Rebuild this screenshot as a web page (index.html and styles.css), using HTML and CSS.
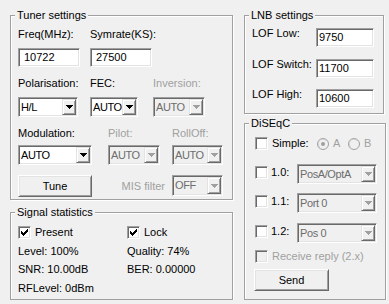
FILE: index.html
```html
<!DOCTYPE html>
<html lang="en">
<head>
  <meta charset="UTF-8">
  <meta name="viewport" content="width=device-width, initial-scale=1.0">
  <title>Tuner settings</title>
  <link rel="stylesheet" href="styles.css">
</head>
<body>
  <div class="dialog">
    <!-- Left column -->
    <div class="column left-column">
      <fieldset class="group">
        <legend>Tuner settings</legend>
        <div class="tuner-body">
          <div class="tuner-top">
            <span>Freq(MHz):</span>
            <span>Symrate(KS):</span>
            <span></span>
            <div class="edit w-62">10722</div>
            <div class="edit w-62">27500</div>
            <span></span>
            <span>Polarisation:</span>
            <span>FEC:</span>
            <span class="disabled">Inversion:</span>
            <div class="combo w-60"><span class="combo-text">H/L</span><span class="combo-btn"><svg width="7" height="4" viewBox="0 0 7 4"><path d="M0 0H7V1H6V2H5V3H4V4H3V3H2V2H1V1H0Z"/></svg></span></div>
            <div class="combo w-48"><span class="combo-text">AUTO</span><span class="combo-btn"><svg width="7" height="4" viewBox="0 0 7 4"><path d="M0 0H7V1H6V2H5V3H4V4H3V3H2V2H1V1H0Z"/></svg></span></div>
            <div class="combo combo-off w-52"><span class="combo-text">AUTO</span><span class="combo-btn"><svg width="7" height="4" viewBox="0 0 7 4"><path d="M0 0H7V1H6V2H5V3H4V4H3V3H2V2H1V1H0Z"/></svg></span></div>
          </div>
          <div class="tuner-bottom">
            <span>Modulation:</span>
            <span class="disabled">Pilot:</span>
            <span class="disabled">RollOff:</span>
            <div class="combo w-74"><span class="combo-text">AUTO</span><span class="combo-btn"><svg width="7" height="4" viewBox="0 0 7 4"><path d="M0 0H7V1H6V2H5V3H4V4H3V3H2V2H1V1H0Z"/></svg></span></div>
            <div class="combo combo-off w-52"><span class="combo-text">AUTO</span><span class="combo-btn"><svg width="7" height="4" viewBox="0 0 7 4"><path d="M0 0H7V1H6V2H5V3H4V4H3V3H2V2H1V1H0Z"/></svg></span></div>
            <div class="combo combo-off w-51"><span class="combo-text">AUTO</span><span class="combo-btn"><svg width="7" height="4" viewBox="0 0 7 4"><path d="M0 0H7V1H6V2H5V3H4V4H3V3H2V2H1V1H0Z"/></svg></span></div>
            <button class="button w-74">Tune</button>
            <span class="disabled mis-label">MIS filter</span>
            <div class="combo combo-off combo-tall w-51"><span class="combo-text">OFF</span><span class="combo-btn"><svg width="7" height="4" viewBox="0 0 7 4"><path d="M0 0H7V1H6V2H5V3H4V4H3V3H2V2H1V1H0Z"/></svg></span></div>
          </div>
        </div>
      </fieldset>

      <fieldset class="group">
        <legend>Signal statistics</legend>
        <div class="signal-body">
          <div class="signal-grid">
            <div class="check"><span class="checkbox"><svg width="11" height="11" viewBox="1 1 11 11"><path d="M9 3h1v1h-1zM8 4h2v1h-2zM3 5h1v1h-1zM7 5h3v1h-3zM3 6h2v1h-2zM6 6h3v1h-3zM3 7h5v1h-5zM4 8h3v1h-3zM5 9h1v1h-1z"/></svg></span><span>Present</span></div>
            <div class="check"><span class="checkbox"><svg width="11" height="11" viewBox="1 1 11 11"><path d="M9 3h1v1h-1zM8 4h2v1h-2zM3 5h1v1h-1zM7 5h3v1h-3zM3 6h2v1h-2zM6 6h3v1h-3zM3 7h5v1h-5zM4 8h3v1h-3zM5 9h1v1h-1z"/></svg></span><span>Lock</span></div>
            <span>Level: 100%</span>
            <span>Quality: 74%</span>
            <span>SNR: 10.00dB</span>
            <span>BER: 0.00000</span>
            <span>RFLevel: 0dBm</span>
          </div>
        </div>
      </fieldset>
    </div>

    <!-- Right column -->
    <div class="column right-column">
      <fieldset class="group lnb-group">
        <legend>LNB settings</legend>
        <div class="lnb-body">
          <div class="lnb-grid">
            <span class="lnb-label">LOF Low:</span>
            <div class="edit edit-lnb w-58">9750</div>
            <span class="lnb-label">LOF Switch:</span>
            <div class="edit edit-lnb w-58">11700</div>
            <span class="lnb-label">LOF High:</span>
            <div class="edit edit-lnb w-58">10600</div>
          </div>
        </div>
      </fieldset>

      <fieldset class="group">
        <legend>DiSEqC</legend>
        <div class="diseqc-body">
          <div class="diseqc-grid">
            <span class="checkbox"></span>
            <div class="simple-options">
              <span class="simple-label">Simple:</span>
              <svg class="radio" width="12" height="12" viewBox="0 0 12 12"><circle cx="6" cy="6" r="5.5" fill="#f0f0f0" stroke="#a0a0a0"/><path d="M2.5 9A4.5 4.5 0 0 1 9 2.5" fill="none" stroke="#c8c8c8"/><circle cx="6" cy="6" r="2" fill="#a0a0a0"/></svg>
              <span class="disabled radio-label">A</span>
              <svg class="radio" width="12" height="12" viewBox="0 0 12 12"><circle cx="6" cy="6" r="5.5" fill="#f0f0f0" stroke="#a0a0a0"/><path d="M2.5 9A4.5 4.5 0 0 1 9 2.5" fill="none" stroke="#c8c8c8"/></svg>
              <span class="disabled radio-label">B</span>
            </div>

            <span class="checkbox row-check"></span>
            <span class="row-label">1.0:</span>
            <div class="combo combo-off w-80"><span class="combo-text">PosA/OptA</span><span class="combo-btn"><svg width="7" height="4" viewBox="0 0 7 4"><path d="M0 0H7V1H6V2H5V3H4V4H3V3H2V2H1V1H0Z"/></svg></span></div>

            <span class="checkbox row-check"></span>
            <span class="row-label">1.1:</span>
            <div class="combo combo-off w-80"><span class="combo-text">Port 0</span><span class="combo-btn"><svg width="7" height="4" viewBox="0 0 7 4"><path d="M0 0H7V1H6V2H5V3H4V4H3V3H2V2H1V1H0Z"/></svg></span></div>

            <span class="checkbox row-check"></span>
            <span class="row-label">1.2:</span>
            <div class="combo combo-off w-80"><span class="combo-text">Pos 0</span><span class="combo-btn"><svg width="7" height="4" viewBox="0 0 7 4"><path d="M0 0H7V1H6V2H5V3H4V4H3V3H2V2H1V1H0Z"/></svg></span></div>

            <span class="checkbox checkbox-off"></span>
            <span class="disabled reply-label">Receive reply (2.x)</span>

            <button class="button send-button">Send</button>
          </div>
        </div>
      </fieldset>
    </div>
  </div>
</body>
</html>
```

FILE: styles.css
```css
/* General Styles */
body {
  margin: 0;
  background-color: #f0f0f0;
  font-family: "Liberation Sans", Arial, sans-serif;
  font-size: 11px;
  line-height: 13px;
  color: #000;
}

.dialog {
  display: flex;
  gap: 11px;
  padding: 9px 0 0 10px;
}

.column {
  display: flex;
  flex-direction: column;
}

.left-column {
  width: 223px;
  gap: 6px;
}

.right-column {
  width: 142px;
  gap: 3px;
}

.disabled {
  color: #a0a0a0;
}

/* Group boxes */
.group {
  box-sizing: border-box;
  margin: 0;
  padding: 0;
  min-width: 0;
  border: 1px solid #a0a0a0;
  box-shadow: 1px 1px 0 #fff, inset 1px 1px 0 #fff;
}

.group legend {
  margin-left: 4px;
  padding: 0 2px;
  background-color: #f0f0f0;
}

.lnb-group {
  width: 140px;
}

/* Tuner settings */
.tuner-body {
  padding: 6px 0 2px 7px;
}

.tuner-top {
  display: grid;
  grid-template-columns: 72px 63px 1fr;
  grid-template-rows: 20px 29px 20px 20px;
  align-items: start;
  justify-items: start;
}

.tuner-bottom {
  display: grid;
  grid-template-columns: 90px 64px 1fr;
  grid-template-rows: 18px 30px 22px;
  align-items: start;
  justify-items: start;
  margin-top: 10px;
}

.mis-label {
  justify-self: end;
  align-self: center;
  padding-right: 7px;
}

/* Signal statistics */
.signal-body {
  padding: 7px 0 4px 7px;
}

.signal-grid {
  display: grid;
  grid-template-columns: 109px 1fr;
  grid-template-rows: 19px 18px 19px 13px;
  align-items: start;
}

.check {
  display: flex;
  align-items: center;
  gap: 4px;
}

/* LNB settings */
.lnb-body {
  padding: 6px 0 5px 7px;
}

.lnb-grid {
  display: grid;
  grid-template-columns: 64px 58px;
  grid-template-rows: 31px 30px 19px;
  align-items: start;
}

.lnb-label {
  margin-top: -1px;
}

/* DiSEqC */
.diseqc-body {
  padding: 7px 0 8px 10px;
}

.diseqc-grid {
  display: grid;
  grid-template-columns: 13px 29px 80px;
  grid-template-rows: 27px 29px 30px 27px 19px 22px;
  align-items: start;
  justify-items: start;
}

.simple-options {
  grid-column: 2 / 4;
  display: flex;
  align-items: center;
  height: 13px;
}

.simple-label {
  width: 45px;
  padding-left: 4px;
}

.radio {
  flex: none;
}

.radio-label {
  width: 19px;
  padding-left: 4px;
  box-sizing: border-box;
}

.row-check {
  margin-top: 2px;
}

.row-label {
  margin-top: 2px;
  padding-left: 3px;
}

.reply-label {
  grid-column: 2 / 4;
  padding-left: 4px;
}

.send-button {
  grid-column: 1 / 4;
  width: 75px;
  margin-left: -1px;
}

/* Controls */
.edit {
  box-sizing: border-box;
  height: 19px;
  padding: 1px 1px 1px 5px;
  line-height: 15px;
  border: 1px solid;
  border-color: #a0a0a0 #fff #fff #a0a0a0;
  box-shadow: inset 1px 1px 0 #696969, inset -1px -1px 0 #e3e3e3;
  background-color: #fff;
}

.edit-lnb {
  padding-left: 2px;
}

.combo {
  box-sizing: border-box;
  display: flex;
  height: 20px;
  padding: 1px;
  border: 1px solid;
  border-color: #a0a0a0 #fff #fff #a0a0a0;
  box-shadow: inset 1px 1px 0 #696969, inset -1px -1px 0 #e3e3e3;
  background-color: #fff;
  color: #000;
}

.combo-tall {
  height: 21px;
}

.combo-text {
  flex: 1;
  min-width: 0;
  padding-left: 1px;
  line-height: 16px;
  letter-spacing: -0.4px;
  white-space: nowrap;
  overflow: hidden;
}

.combo-btn {
  box-sizing: border-box;
  display: flex;
  flex: none;
  align-items: center;
  justify-content: center;
  width: 14px;
  border: 1px solid;
  border-color: #e3e3e3 #696969 #696969 #e3e3e3;
  box-shadow: inset 1px 1px 0 #fff, inset -1px -1px 0 #a0a0a0;
  background-color: #f0f0f0;
}

.combo-btn svg {
  fill: currentColor;
}

.combo-off {
  background-color: #f0f0f0;
  color: #6d6d6d;
}

.combo-off .combo-btn {
  color: #a0a0a0;
}

.checkbox {
  box-sizing: border-box;
  display: block;
  width: 13px;
  height: 13px;
  border: 1px solid;
  border-color: #a0a0a0 #fff #fff #a0a0a0;
  box-shadow: inset 1px 1px 0 #696969, inset -1px -1px 0 #e3e3e3;
  background-color: #fff;
}

.checkbox svg {
  display: block;
}

.checkbox-off {
  background-color: #f0f0f0;
}

.button {
  box-sizing: border-box;
  height: 22px;
  padding: 0;
  font: inherit;
  color: #000;
  border: 1px solid;
  border-color: #fff #696969 #696969 #fff;
  box-shadow: inset 1px 1px 0 #e3e3e3, inset -1px -1px 0 #a0a0a0;
  background-color: #f0f0f0;
}

.w-48 { width: 48px; }
.w-51 { width: 51px; }
.w-52 { width: 52px; }
.w-58 { width: 58px; }
.w-60 { width: 60px; }
.w-62 { width: 62px; }
.w-74 { width: 74px; }
.w-80 { width: 80px; }
```
